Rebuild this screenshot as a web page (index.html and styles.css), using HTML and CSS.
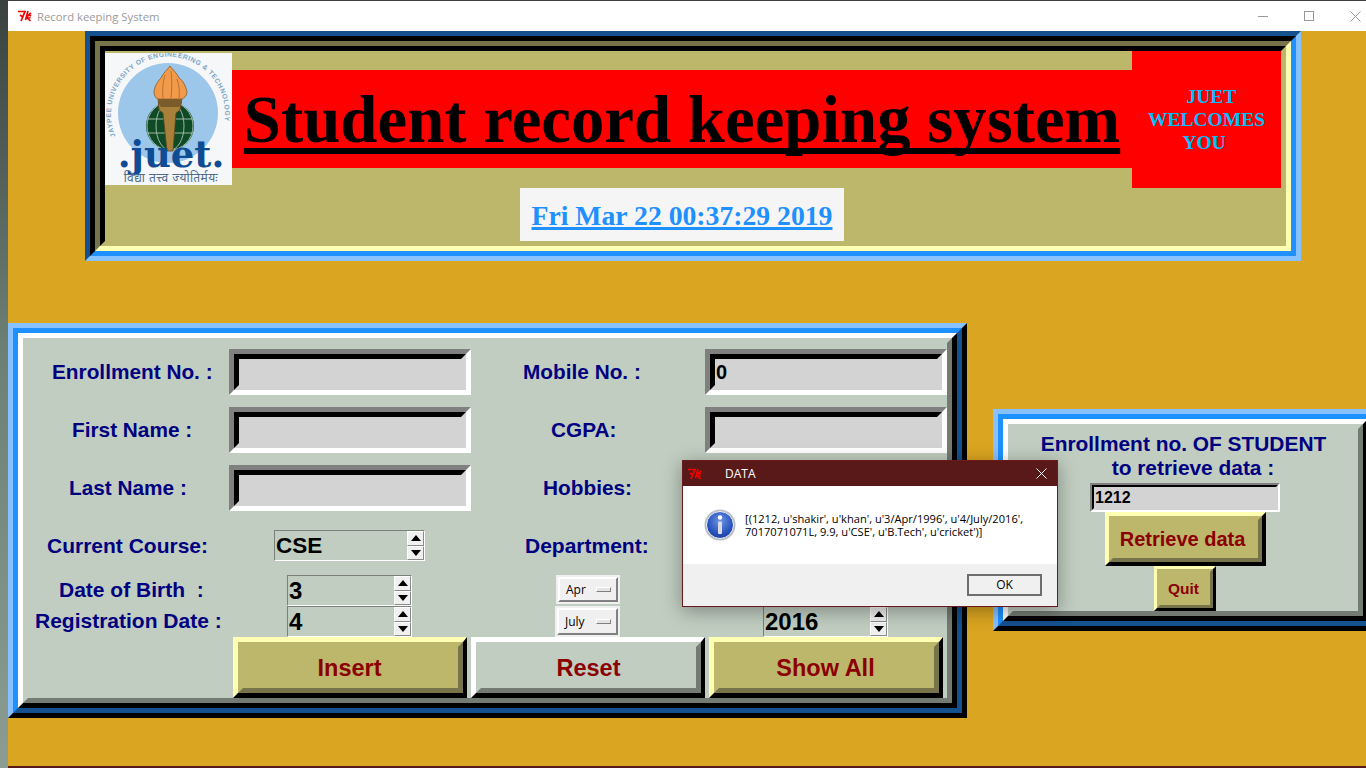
FILE: index.html
```html
<!DOCTYPE html>
<html lang="en">
<head>
<meta charset="utf-8">
<title>Record keeping System</title>
<link rel="stylesheet" href="styles.css">
</head>
<body>
<div class="desktop">
  <div class="window">
    <div class="titlebar">
      <svg class="tk-icon" viewBox="0 0 16 12" width="16" height="12"><path d="M1 1.500h7L4 11M5 6.500L3 5M11 1L8.500 10M14 3L9.500 7L13.500 11M12 5l2 1M10.500 8.500l3-1" fill="none" stroke="#f00000" stroke-width="1.700"/></svg>
      <span class="title-text">Record keeping System</span>
      <div class="controls">
        <svg class="ctl-min" width="10" height="10" viewBox="0 0 10 10"><path d="M0 5.500h10" stroke="#999" fill="none"/></svg>
        <svg class="ctl-max" width="10" height="10" viewBox="0 0 10 10"><rect x=".5" y=".5" width="9" height="9" stroke="#999" fill="none"/></svg>
        <svg class="ctl-close" width="11" height="11" viewBox="0 0 11 11"><path d="M.5.5l10 10M10.500.5l-10 10" stroke="#999" fill="none"/></svg>
      </div>
    </div>
    <div class="client">
      <header class="hd1"><div class="hd2"><div class="hd3"><div class="hd4"><div class="hd-content">
        <svg class="logo" width="127" height="132" viewBox="0 0 127 132">
          <rect width="127" height="132" fill="#f6f7f8"/>
          <circle cx="63" cy="60" r="50" fill="#9cc6ea"/>
          <defs><path id="ring" d="M11 84A57 57 0 1 1 115 84"/></defs>
          <text class="logo-ring"><textPath href="#ring" startOffset="1">JAYPEE UNIVERSITY OF ENGINEERING &amp; TECHNOLOGY</textPath></text>
          <circle cx="65" cy="73" r="24" fill="#0e4a25"/>
          <g fill="none" stroke="#9fb7a4" stroke-width="1"><ellipse cx="65" cy="73" rx="14" ry="24"/><ellipse cx="65" cy="73" rx="23" ry="24"/><path d="M42 66h46M42 80h46"/></g>
          <path d="M53 45h24l-2 12-4 3-3 38h-6l-4-38-4-3z" fill="#a9803a" stroke="#5f4520" stroke-width=".8"/>
          <path d="M53 45h24v5l-3 4H56l-3-4z" fill="#7a5c2b"/>
          <path d="M65 13c3 4 6 6 9 12 4 2 7 9 8 14 0 4-3 6-5 7H53c-3-1-4-4-4-8 1-6 4-10 7-13 2-5 6-8 9-12z" fill="#f09a4a" stroke="#8d5b2b" stroke-width=".8"/>
          <path d="M60 22c-2 7-3 14-2 23M66 18c1 8 1 18 0 27M72 26c2 6 3 13 2 19" fill="none" stroke="#a8662c" stroke-width=".8"/>
          <text class="logo-juet" x="66" y="114" text-anchor="middle">.juet.</text>
          <text class="logo-motto" x="66" y="129" text-anchor="middle">विद्या तत्त्व ज्योतिर्मयः</text>
        </svg>
        <div class="title-band"><h1 class="main-title">Student record keeping system</h1></div>
        <div class="welcome">  JUET
WELCOMES
YOU </div>
        <div class="clock">Fri Mar 22 00:37:29 2019</div>
      </div></div></div></div></header>

      <div class="lower">
        <section class="pn1 form-panel"><div class="pn2"><div class="pn3"><div class="pn4"><div class="form">
          <div class="lab tall c1 l-enroll">Enrollment No. :</div>
          <div class="entry c2"><div class="entry-in"></div></div>
          <div class="lab tall c3 l-mobile">Mobile No. :</div>
          <div class="entry c4"><div class="entry-in">0</div></div>

          <div class="lab tall c1 l-first">First Name :</div>
          <div class="entry c2"><div class="entry-in"></div></div>
          <div class="lab tall c3 l-cgpa">CGPA:</div>
          <div class="entry c4"><div class="entry-in"></div></div>

          <div class="lab tall c1 l-last">Last Name :</div>
          <div class="entry c2"><div class="entry-in"></div></div>
          <div class="lab tall c3 l-hobby">Hobbies:</div>
          <div class="entry c4"><div class="entry-in"></div></div>

          <div class="lab short c1 l-course">Current Course:</div>
          <div class="spin c2 s-course"><span class="spin-val">CSE</span><div class="arrows"><i class="up"></i><i class="down"></i></div></div>
          <div class="lab short c3 l-dept">Department:</div>
          <div class="spin c4 s-course"><span class="spin-val"></span><div class="arrows"><i class="up"></i><i class="down"></i></div></div>

          <div class="lab short c1 l-dob">Date of Birth&nbsp; :</div>
          <div class="spin c2 s-day"><span class="spin-val">3</span><div class="arrows"><i class="up"></i><i class="down"></i></div></div>
          <div class="opt c3 o-apr"><div class="opt-btn">Apr<b class="ind"></b></div></div>
          <div class="spin c4 s-year"><span class="spin-val"></span><div class="arrows"><i class="up"></i><i class="down"></i></div></div>

          <div class="lab short c1 l-reg">Registration Date :</div>
          <div class="spin c2 s-day"><span class="spin-val">4</span><div class="arrows"><i class="up"></i><i class="down"></i></div></div>
          <div class="opt c3 o-july"><div class="opt-btn">July<b class="ind"></b></div></div>
          <div class="spin c4 s-year"><span class="spin-val">2016</span><div class="arrows"><i class="up"></i><i class="down"></i></div></div>

          <div class="actions">
            <div class="btn khaki big"><div class="btn-in">Insert</div></div>
            <div class="btn sage big"><div class="btn-in">Reset</div></div>
            <div class="btn khaki big"><div class="btn-in">Show All</div></div>
          </div>
        </div></div></div></div></section>

        <section class="pn1 side-panel"><div class="pn2"><div class="pn3"><div class="pn4"><div class="side">
          <div class="side-label">Enrollment no. OF STUDENT<br><span class="side-l2">to retrieve data :</span></div>
          <div class="side-entry"><div class="side-entry-in">1212</div></div>
          <div class="btn khaki mid"><div class="btn-in">Retrieve data</div></div>
          <div class="btn khaki small"><div class="btn-in">Quit</div></div>
        </div></div></div></div></section>
      </div>

      <div class="dialog">
        <div class="dlg-title">
          <svg class="tk-icon-d" viewBox="0 0 16 12" width="16" height="12"><path d="M1 1.500h7L4 11M5 6.500L3 5M11 1L8.500 10M14 3L9.500 7L13.500 11M12 5l2 1M10.500 8.500l3-1" fill="none" stroke="#f00000" stroke-width="1.700"/></svg>
          <span class="dlg-name">DATA</span>
          <svg class="dlg-x" width="11" height="11" viewBox="0 0 11 11"><path d="M.5.5l10 10M10.500.5l-10 10" stroke="#fff" fill="none"/></svg>
        </div>
        <div class="dlg-body">
          <svg class="info" width="32" height="32" viewBox="0 0 32 32">
            <defs><radialGradient id="ig" cx=".5" cy=".35" r=".75"><stop offset="0" stop-color="#6f96e6"/><stop offset=".6" stop-color="#2a55bd"/><stop offset="1" stop-color="#14348f"/></radialGradient></defs>
            <circle cx="16" cy="16" r="15.500" fill="#b9bec6"/>
            <circle cx="16" cy="16" r="13.500" fill="url(#ig)" stroke="#eef0f4" stroke-width="1"/>
            <circle cx="16" cy="8.500" r="2.200" fill="#fff"/>
            <rect x="14" y="12.500" width="4" height="12.500" rx="1" fill="#d9dde2"/>
          </svg>
          <p class="dlg-msg">[(1212, u'shakir', u'khan', u'3/Apr/1996', u'4/July/2016',<br>7017071071L, 9.9, u'CSE', u'B.Tech', u'cricket')]</p>
        </div>
        <div class="dlg-foot"><div class="ok">OK</div></div>
      </div>
    </div>
  </div>
</div>
</body>
</html>
```

FILE: styles.css
```css
* { box-sizing: border-box; }
html, body { margin: 0; padding: 0; height: 100%; overflow: hidden; }
.desktop {
  width: 1366px; height: 768px; overflow: hidden;
  background: linear-gradient(#39423e, #6d7f75 45%, #8b9c92);
  padding-left: 8px;
}
.window {
  width: 1358px; height: 768px;
  border-top: 1px solid #3d403f;
  border-bottom: 2px solid #5a1919;
  display: flex; flex-direction: column;
}
.titlebar {
  height: 30px; flex: none; background: #fff;
  display: flex; align-items: center; padding-left: 9px;
  font: 11.300px "Open Sans", "Noto Sans", sans-serif; color: #9a9a9a;
}
.tk-icon { margin-right: 4px; }
.controls { margin-left: auto; display: flex; align-items: center; }
.controls svg { display: block; }
.ctl-min { margin-right: 36px; }
.ctl-max { margin-right: 36px; }
.ctl-close { margin-right: 5px; }

.client {
  flex: 1; position: relative; overflow: hidden;
  background: #daa520;
  font-family: "Liberation Sans", Arial, sans-serif;
}

/* header: sunken four-layer bevel */
.hd1, .hd2, .hd3, .hd4 { border-style: solid; border-width: 5px; display: flex; }
.hd2 > *, .hd3 > *, .hd4 > *, .hd1 > * { flex: 1; }
.hd1 { width: 1216px; height: 230px; margin-left: 77px; border-color: #15508f #87c1ff #87c1ff #15508f; }
.hd2 { border-color: #000 #1e90ff #1e90ff #000; }
.hd3 { border-color: #77734a #ffffb4 #ffffb4 #77734a; }
.hd4 { border-color: #000 #bdb76b #bdb76b #000; }
.hd-content {
  background: #bdb76b;
  display: grid;
  grid-template-columns: 127px 900px 149px;
  grid-template-rows: 137px 53px;
}
.logo { margin-top: 2px; display: block; }
.logo-ring { font: bold 6.800px "Liberation Sans", sans-serif; fill: #7ba6c6; letter-spacing: .5px; }
.logo-juet { font: bold 37px "DejaVu Serif", serif; fill: #0f4c94; }
.logo-motto { font: 12px "Noto Sans", "DejaVu Sans", sans-serif; fill: #4d6b8a; letter-spacing: .5px; }
.title-band {
  margin-top: 19px; height: 98px; background: #f00;
  display: flex; align-items: flex-start; justify-content: center;
}
.main-title {
  margin: 0; font: bold 66.800px/98px "Liberation Serif", "Times New Roman", serif; color: #000;
  white-space: nowrap;
  text-decoration: underline; text-decoration-thickness: 6px; text-underline-offset: 6px;
  text-decoration-skip-ink: none;
}
.welcome {
  background: #f00; color: #00bfff;
  font: bold 19.500px/23px "Liberation Serif", "Times New Roman", serif;
  white-space: pre; text-align: center;
  padding-top: 34px;
}
.clock {
  grid-column: 1 / -1; justify-self: start; margin-left: 415px; width: 324px;
  background: #f5f5f5; color: #1e90ff;
  font: bold 27.700px/55px "Liberation Serif", "Times New Roman", serif;
  height: 53px;
  text-align: center; text-decoration: underline; text-decoration-thickness: 3px; white-space: nowrap;
}

.lower { display: flex; align-items: flex-start; margin-top: 62px; }

/* raised four-layer bevel */
.pn1, .pn2, .pn3, .pn4 { border-style: solid; border-width: 5px; display: flex; }
.pn1 > *, .pn2 > *, .pn3 > *, .pn4 > * { flex: 1; }
.pn1 { border-color: #87c1ff #000 #000 #87c1ff; }
.pn2 { border-color: #1e90ff #15508f #15508f #1e90ff; }
.pn3 { border-color: #fff #000 #000 #fff; }
.pn4 { border-color: #c1cdc1 #737b73 #737b73 #c1cdc1; }
.form-panel { width: 959px; height: 395px; flex: none; }
.side-panel { width: 385px; height: 222px; flex: none; margin: 86px 0 0 26px; }

.form {
  background: #c1cdc1; padding-top: 6px;
  display: grid;
  grid-template-columns: 201px 242px 234px 242px;
  grid-template-rows: 58px 58px 65px 45px 31px 31px 61px;
}
.c1 { grid-column: 1; } .c2 { grid-column: 2; } .c3 { grid-column: 3; } .c4 { grid-column: 4; }

.lab {
  display: flex; align-items: center; white-space: nowrap;
  color: #000080; font-weight: bold; font-size: 21px;
}
.tall { height: 46px; font-size: 20.800px; }
.short { height: 31px; }
.l-enroll { padding-left: 24px; } .l-first { padding-left: 44px; } .l-last { padding-left: 41px; }
.l-course { padding-left: 19px; padding-top: 1px; } .l-dob { padding-left: 31px; padding-bottom: 1px; } .l-reg { padding-left: 7px; padding-bottom: 1px; }
.l-mobile { padding-left: 52px; } .l-cgpa { padding-left: 80px; } .l-hobby { padding-left: 72px; } .l-dept { padding-left: 54px; padding-top: 1px; }

.entry { height: 46px; border: 5px solid; border-color: #808080 #fff #fff #808080; display: flex; }
.entry-in {
  flex: 1; border: 5px solid; border-color: #000 #d3d3d3 #d3d3d3 #000;
  background: #d3d3d3; color: #000;
  font-weight: bold; font-size: 20px; line-height: 26px; padding-left: 1px;
}

.spin {
  height: 31px; border: 1px solid; border-color: #7b8079 #fff #fff #7b8079;
  display: flex; justify-content: space-between; background: #c1cdc1;
}
.s-course { width: 151px; margin-left: 45px; }
.s-course .spin-val { font-size: 22.500px; }
.s-day { width: 125px; margin-left: 58px; }
.s-year { width: 125px; margin-left: 58px; }
.spin-val { font-weight: bold; font-size: 24px; line-height: 29px; padding-left: 1px; color: #000; }
.arrows { width: 17px; display: flex; flex-direction: column; }
.arrows i {
  flex: 1; display: flex; align-items: center; justify-content: center;
  background: #f0f0f0;
  border: 1px solid; border-color: #fff #8a8a8a #8a8a8a #fff;
}
.arrows i::before {
  content: ""; width: 0; height: 0;
  border-left: 5px solid transparent; border-right: 5px solid transparent;
}
.up::before { border-bottom: 6px solid #000; }
.down::before { border-top: 6px solid #000; }

.opt { background: #f0f0f0; padding: 2px; display: flex; align-self: start; }
.o-apr { margin-left: 85px; width: 64px; height: 29px; }
.o-july { margin-left: 84px; width: 65px; height: 31px; }
.opt-btn {
  flex: 1; border: 2px solid; border-color: #fff #808080 #808080 #fff;
  background: #f0f0f0; color: #000;
  font: 12px "Open Sans", "Noto Sans", sans-serif;
  display: flex; align-items: center; justify-content: space-between;
  padding: 0 5px 0 6px;
}
.ind { width: 15px; height: 5px; border: 1px solid; border-color: #fff #808080 #808080 #fff; background: #e4e4e4; }

.actions { grid-column: 1 / -1; display: flex; gap: 4px; padding-left: 205px; }

.btn { display: flex; border-style: solid; color: #8b0000; font-weight: bold; }
.btn-in { flex: 1; border-style: solid; display: flex; align-items: center; justify-content: center; white-space: nowrap; }
.khaki { border-color: #ffffb4 #000 #000 #ffffb4; }
.khaki .btn-in { border-color: #bdb76b #77734a #77734a #bdb76b; background: #bdb76b; }
.sage { border-color: #fff #000 #000 #fff; }
.sage .btn-in { border-color: #c1cdc1 #737b73 #737b73 #c1cdc1; background: #c1cdc1; }
.big { width: 234px; height: 61px; border-width: 5px 4px 5px 5px; font-size: 23.500px; }
.big .btn-in { border-width: 5px; padding-top: 2px; padding-right: 2px; }
.big.sage .btn-in { padding-right: 0; }
.mid { width: 161px; height: 54px; border-width: 4px; font-size: 20px; margin-left: 17px; }
.mid .btn-in { border-width: 4px; padding-right: 6px; }
.small { width: 62px; height: 45px; border-width: 3px; font-size: 15.500px; margin-left: 66px; }
.small .btn-in { border-width: 3px; padding-right: 3px; }

.side {
  background: #c1cdc1; display: flex; flex-direction: column;
  padding-left: 75px; padding-top: 3px; align-items: flex-start;
}
.side-label {
  width: 341px; margin-left: -75px; text-align: center;
  color: #000080; font-weight: bold; font-size: 20.900px; line-height: 24px; height: 48px;
}
.side-l2 { padding-left: 19px; }
.side-entry { width: 190px; height: 29px; margin-left: 2px; margin-top: 3px; border: 2px solid; border-color: #808080 #fff #fff #808080; display: flex; }
.side-entry-in {
  flex: 1; border: 2px solid; border-color: #000 #d3d3d3 #d3d3d3 #000; background: #d3d3d3;
  font-weight: bold; font-size: 16px; line-height: 21px; padding-left: 1px; color: #000;
}

.dialog {
  position: absolute; left: 674px; top: 429px; width: 376px; height: 147px;
  border: 1px solid #6a1a1a; background: #fff;
  box-shadow: 0 4px 18px rgba(0,0,0,.35);
  display: flex; flex-direction: column;
}
.dlg-title {
  height: 25px; flex: none; background: #5a1919; color: #fff;
  display: flex; align-items: center; padding: 0 10px 0 4px;
  font: 12px "Open Sans", "Noto Sans", sans-serif;
}
.dlg-name { margin-left: 22px; }
.dlg-x { margin-left: auto; }
.dlg-body { flex: 1; display: flex; align-items: flex-start; padding: 23px 0 0 21px; }
.info { flex: none; display: block; }
.dlg-msg { margin: 3px 0 0 9px; font: 11.100px/13px "Open Sans", "Noto Sans", sans-serif; color: #000; white-space: nowrap; }
.dlg-foot { height: 42px; flex: none; background: #f0f0f0; display: flex; justify-content: flex-end; padding: 10px 15px 0 0; }
.ok {
  width: 75px; height: 22px; border: 2px solid; border-color: #6d6d6d;
  background: #f0f0f0; color: #000;
  font: 12px/18px "Open Sans", "Noto Sans", sans-serif; text-align: center;
}
```
